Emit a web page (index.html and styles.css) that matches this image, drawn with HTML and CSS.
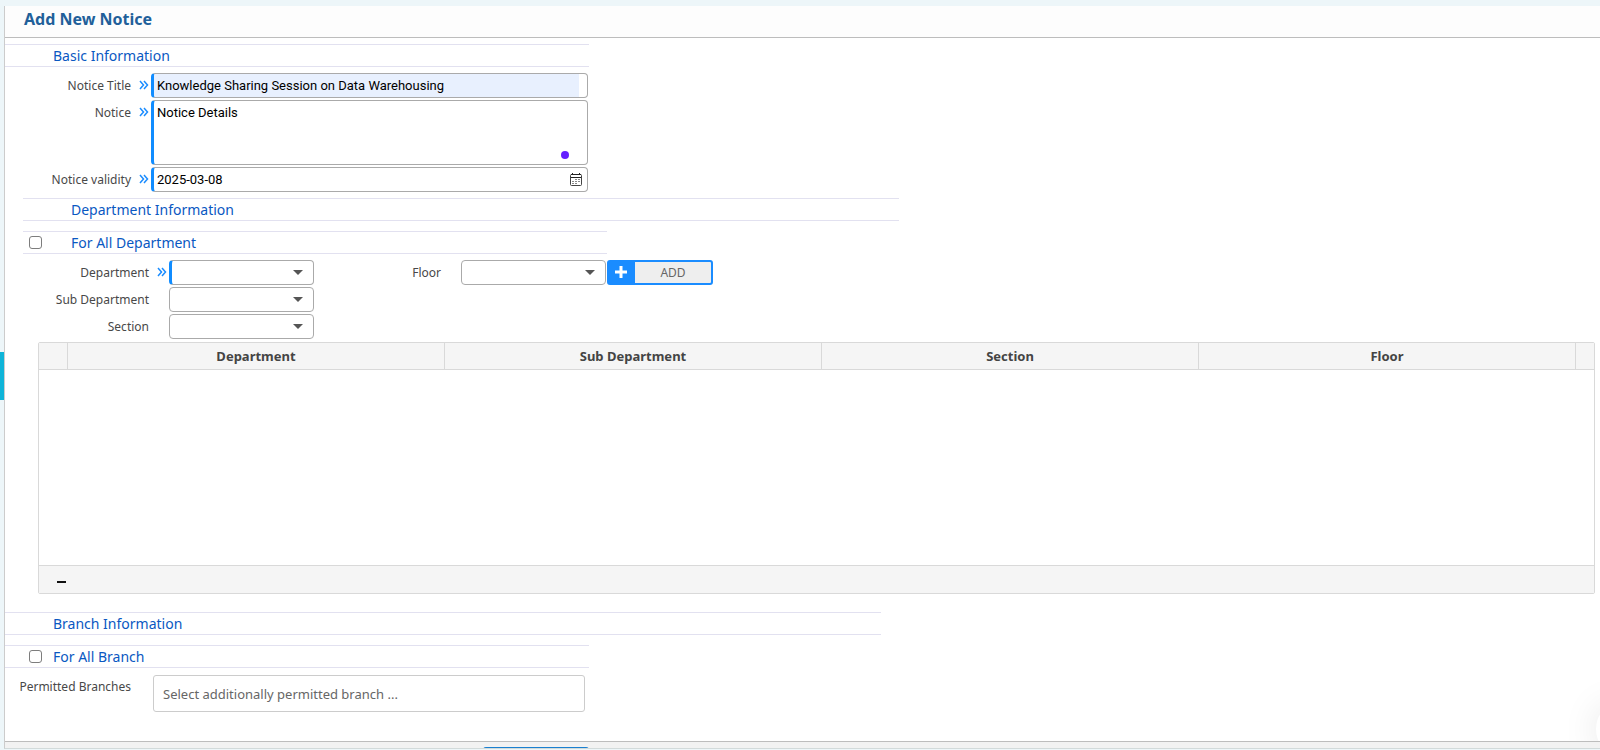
FILE: index.html
```html
<!DOCTYPE html>
<html lang="en">
	<head>
		<meta charset="utf-8">
		<title>Add New Notice</title>
		<link rel="stylesheet" href="styles.css">
	</head>
	<body>
		<svg class="defs" width="0" height="0">
			<symbol id="required" viewBox="0 0 10 10">
				<path d="M1 1 L4.5 5 L1 9 M5 1 L8.5 5 L5 9" fill="none" stroke="#1a8cff" stroke-width="1.5"/>
			</symbol>
		</svg>
		<button class="side-tab" type="button" aria-label="Open menu"></button>
		<form class="panel">
			<header class="panel-header">
				<h1>Add New Notice</h1>
			</header>
			<main class="content">
				<h2 class="legend">Basic Information</h2>
				<div class="form basic">
					<label for="title">Notice Title</label>
					<svg class="mark"><use href="#required"/></svg>
					<div class="field required filled">
						<input id="title" type="text" value="Knowledge Sharing Session on Data Warehousing">
					</div>
					<label for="notice">Notice</label>
					<svg class="mark"><use href="#required"/></svg>
					<div class="field required area">
						<textarea id="notice">Notice Details</textarea>
						<span class="dot"></span>
					</div>
					<label for="validity">Notice validity</label>
					<svg class="mark"><use href="#required"/></svg>
					<div class="field required">
						<input id="validity" type="text" value="2025-03-08">
						<button class="calendar" type="button" aria-label="Pick a date">
							<svg width="12" height="13" viewBox="0 0 12 13">
								<rect x="0.5" y="1.5" width="11" height="11" rx="1" fill="none" stroke="#444"/>
								<path d="M1 1.5H11M1 4.5H11" stroke="#222"/>
								<path d="M2.5 0V2M9.5 0V2" stroke="#222"/>
								<path d="M5 6.5H10M2 8.5H10M2 10.5H8" stroke="#888" stroke-dasharray="2 1"/>
							</svg>
						</button>
					</div>
				</div>

				<section class="department">
					<h2 class="legend wide">Department Information</h2>
					<div class="legend check">
						<input id="all-department" type="checkbox">
						<label for="all-department">For All Department</label>
					</div>
					<div class="selects">
						<div class="form narrow">
							<label for="department">Department</label>
							<svg class="mark"><use href="#required"/></svg>
							<div class="field select required"><select id="department"><option></option></select></div>
							<label for="sub-department">Sub Department</label>
							<span></span>
							<div class="field select"><select id="sub-department"><option></option></select></div>
							<label for="section">Section</label>
							<span></span>
							<div class="field select"><select id="section"><option></option></select></div>
						</div>
						<div class="form narrow">
							<label for="floor">Floor</label>
							<span></span>
							<div class="field select"><select id="floor"><option></option></select></div>
						</div>
						<button class="add" type="button">
							<span class="add-icon">
								<svg width="12" height="12" viewBox="0 0 12 12"><path d="M6 0V12M0 6H12" stroke="#fff" stroke-width="3"/></svg>
							</span>
							<span class="add-text">ADD</span>
						</button>
					</div>
					<div class="grid">
						<table>
							<thead>
								<tr>
									<th class="num"></th>
									<th>Department</th>
									<th>Sub Department</th>
									<th>Section</th>
									<th>Floor</th>
									<th class="scroll"></th>
								</tr>
							</thead>
							<tbody>
								<tr><td colspan="6"></td></tr>
							</tbody>
						</table>
						<div class="grid-footer">
							<button class="remove" type="button" aria-label="Remove row"></button>
						</div>
					</div>
				</section>

				<h2 class="legend wide">Branch Information</h2>
				<div class="legend check">
					<input id="all-branch" type="checkbox">
					<label for="all-branch">For All Branch</label>
				</div>
				<div class="form branches">
					<label for="branches">Permitted Branches</label>
					<span></span>
					<input id="branches" type="text" placeholder="Select additionally permitted branch ...">
				</div>
				<button class="bubble" type="button" aria-label="Help"></button>
			</main>
			<footer class="panel-footer">
				<button class="save" type="submit" aria-label="Save"></button>
			</footer>
		</form>
	</body>
</html>
```
FILE: styles.css
```css
* {
	box-sizing: border-box;
	margin: 0;
	padding: 0;
}

body {
	position: relative;
	min-height: 100vh;
	display: flex;
	padding: 6px 0 1px 4px;
	background: #edf6f9;
	color: #484848;
	font-family: "Noto Sans", sans-serif;
	font-size: 12px;
	overflow: hidden;
}

input,
textarea,
select,
button {
	font-family: inherit;
	font-size: inherit;
	color: inherit;
}

.defs {
	position: absolute;
}

.side-tab {
	position: absolute;
	left: 0;
	top: 352px;
	width: 4px;
	height: 48px;
	border: 0;
	background: #0fb4d8;
}

.panel {
	flex: 1;
	display: flex;
	flex-direction: column;
	border-left: 1px solid #ccc;
	border-bottom: 1px solid #d2dada;
	background: #fff;
}

.panel-header {
	height: 32px;
	padding-left: 19px;
	border-bottom: 1px solid #bdbdbd;
	background: #fdfdfd;
}

.panel-header h1 {
	color: #21609a;
	font-size: 16px;
	line-height: 26px;
}

.content {
	position: relative;
	flex: 1;
	padding-top: 6px;
	overflow: hidden;
}

/* section headings */
.legend {
	display: flex;
	align-items: center;
	max-width: 584px;
	height: 23px;
	padding-left: 48px;
	border-top: 1px solid #e2e1f0;
	border-bottom: 1px solid #e2e1f0;
	color: #0a58c2;
	font-size: 14px;
	font-weight: normal;
}

.legend.wide {
	max-width: 876px;
}

.legend.check {
	margin-top: 10px;
	padding-left: 24px;
}

.legend.check label {
	margin-left: 11px;
}

.department .legend.check {
	padding-left: 6px;
}

.department .legend.check label {
	margin-left: 29px;
}

input[type="checkbox"] {
	appearance: none;
	width: 13px;
	height: 13px;
	border: 1px solid #7d7d7d;
	border-radius: 3px;
	background: #fff;
}

/* form rows */
.form {
	display: grid;
	grid-template-columns: 126px 20px 1fr;
	gap: 2px 0;
	max-width: 583px;
}

.form label {
	text-align: right;
	line-height: 25px;
}

.basic {
	margin: 6px 0;
}

.mark {
	width: 10px;
	height: 10px;
	margin: 7px 0 0 8px;
}

.field {
	position: relative;
	display: flex;
	height: 25px;
	border: 1px solid #aaa;
	border-radius: 4px;
	background: #fff;
	overflow: hidden;
}

.field.required {
	border-left: 3px solid #108cff;
}

.field.area {
	height: 65px;
}

.field.filled {
	padding-right: 8px;
}

.field.filled input {
	background: #e8f0fe;
}

.field input,
.field textarea,
.field select {
	flex: 1;
	min-width: 0;
	padding: 0 3px;
	border: 0;
	background: none;
	outline: 0;
	color: #000;
	font-family: Tahoma, Roboto, sans-serif;
	font-size: 13px;
}

.field textarea {
	padding-top: 4px;
	resize: none;
}

.dot {
	position: absolute;
	right: 18px;
	bottom: 5px;
	width: 8px;
	height: 8px;
	border-radius: 50%;
	background: #651fff;
}

.calendar {
	padding: 0 5px;
	border: 0;
	background: none;
}

.calendar svg {
	display: block;
}

.department {
	padding-left: 18px;
}

.selects {
	display: flex;
	margin-top: 6px;
}

.narrow {
	grid-template-columns: 126px 20px 145px;
	align-content: start;
	margin-right: 1px;
}

.field select {
	appearance: none;
}

.select::after {
	content: "";
	position: absolute;
	right: 10px;
	top: 9px;
	border: 5px solid transparent;
	border-top-color: #555;
	border-bottom: 0;
	pointer-events: none;
}

.add {
	display: flex;
	width: 106px;
	height: 25px;
	border: 2px solid #1a8cff;
	border-radius: 3px;
	background: #eee;
}

.add-icon {
	width: 26px;
	height: 21px;
	padding: 3px 2px 0 0;
	background: #1a8cff;
}

.add-text {
	flex: 1;
	color: #666;
	line-height: 21px;
}

/* department list */
.grid {
	margin: 3px 5px 18px 15px;
	border: 1px solid #d9d9d9;
	border-radius: 2px;
}

.grid table {
	width: 100%;
	table-layout: fixed;
	border-collapse: separate;
	border-spacing: 0;
}

.grid th {
	height: 27px;
	border-right: 1px solid #d9d9d9;
	border-bottom: 1px solid #d9d9d9;
	background: #f5f5f5;
	color: #444;
	font-size: 13px;
}

.grid .num {
	width: 29px;
}

.grid .scroll {
	width: 18px;
	border-right: 0;
}

.grid td {
	height: 195px;
}

.grid-footer {
	height: 28px;
	padding: 15px 0 0 18px;
	border-top: 1px solid #d9d9d9;
	background: #f5f5f5;
}

.remove {
	display: block;
	width: 9px;
	height: 2px;
	border: 0;
	background: #111;
}

.branches {
	grid-template-columns: 126px 22px 1fr;
	max-width: 580px;
	margin: 7px 0 28px;
}

.branches label {
	line-height: 24px;
}

.branches input {
	height: 37px;
	padding: 0 9px;
	border: 1px solid #ccc;
	border-radius: 3px;
	font-size: 13px;
}

.branches input::placeholder {
	color: #666;
}

.bubble {
	position: absolute;
	right: -36px;
	bottom: -12px;
	width: 40px;
	height: 48px;
	border: 0;
	border-radius: 50%;
	background: #fff;
	box-shadow: 0 0 36px rgba(0, 0, 0, 0.1);
}

.panel-footer {
	height: 7px;
	padding: 5px 0 0 478px;
	border-top: 1px solid #bdbdbd;
	background: #f2f2f2;
	overflow: hidden;
}

.save {
	display: block;
	width: 106px;
	height: 26px;
	border: 2px solid #1a80d0;
	border-radius: 3px;
	background: #eee;
}
```
